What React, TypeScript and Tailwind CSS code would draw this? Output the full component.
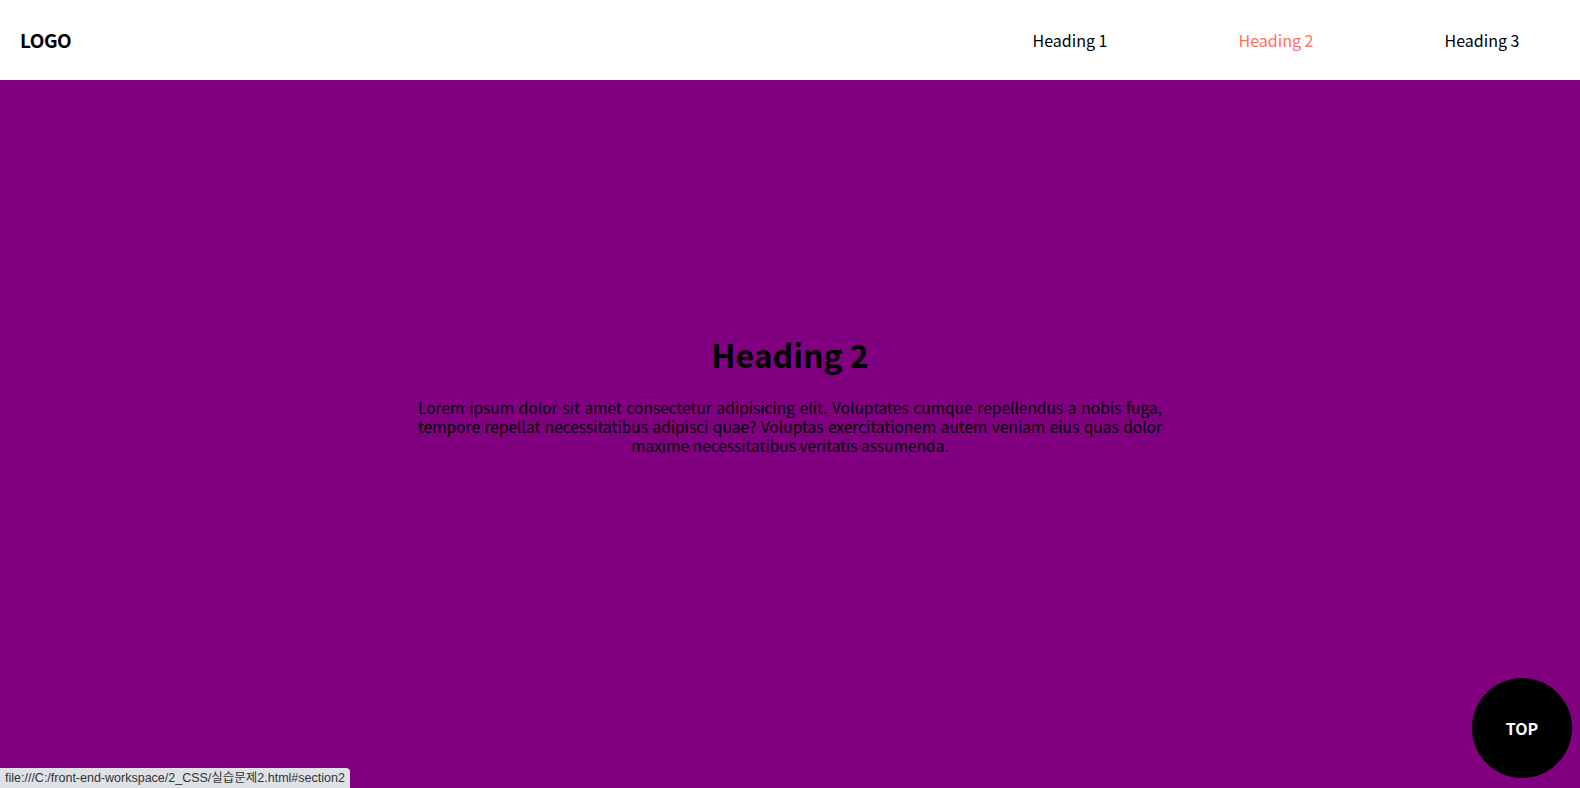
import React from 'react';

const navItems = [
  { label: 'Heading 1', href: '#section1' },
  { label: 'Heading 2', href: '#section2', active: true },
  { label: 'Heading 3', href: '#section3' },
];

const font = "font-['Malgun_Gothic','Noto_Sans_CJK_KR','Noto_Sans',sans-serif]";

export default function App() {
  return (
    <div className={`relative min-h-screen bg-[#800080] ${font}`}>
      {/* Fixed header */}
      <header className="fixed top-0 left-0 right-0 z-10 h-[80px] bg-white flex items-center pl-[20px]">
        <h1 className="text-[19px] font-bold text-black tracking-tight">LOGO</h1>
        <nav className="ml-auto mr-[-5px]">
          <ul className="flex">
            {navItems.map((item) => (
              <li key={item.label} className="w-[206px] text-center">
                <a
                  href={item.href}
                  className={`text-[16px] ${item.active ? 'text-[#ff6f61]' : 'text-black'}`}
                >
                  {item.label}
                </a>
              </li>
            ))}
          </ul>
        </nav>
      </header>

      {/* Section 2 */}
      <section id="section2" className="h-[788px] flex flex-col items-center justify-center">
        <h2 className="text-[32px] font-bold text-black leading-tight">Heading 2</h2>
        <p className="mt-[24px] w-[744px] text-[15.5px] leading-[19px] text-black text-justify [text-align-last:center]">
          Lorem ipsum dolor sit amet consectetur adipisicing elit. Voluptates cumque repellendus a nobis fuga,
          tempore repellat necessitatibus adipisci quae? Voluptas exercitationem autem veniam eius quas dolor
          maxime necessitatibus veritatis assumenda.
        </p>
      </section>

      {/* Top button */}
      <a
        href="#"
        className="fixed right-[8px] bottom-[10px] w-[100px] h-[100px] rounded-full bg-black flex items-center justify-center text-white font-bold text-[16px]"
      >
        TOP
      </a>

      {/* Browser status bubble */}
      <div className="fixed left-0 bottom-0 h-[20px] px-[5px] flex items-center bg-[#dee1e6] rounded-tr-[4px] text-[12.5px] text-[#333] font-['Liberation_Sans','Noto_Sans_CJK_KR',sans-serif]">
        file:///C:/front-end-workspace/2_CSS/실습문제2.html#section2
      </div>
    </div>
  );
}
